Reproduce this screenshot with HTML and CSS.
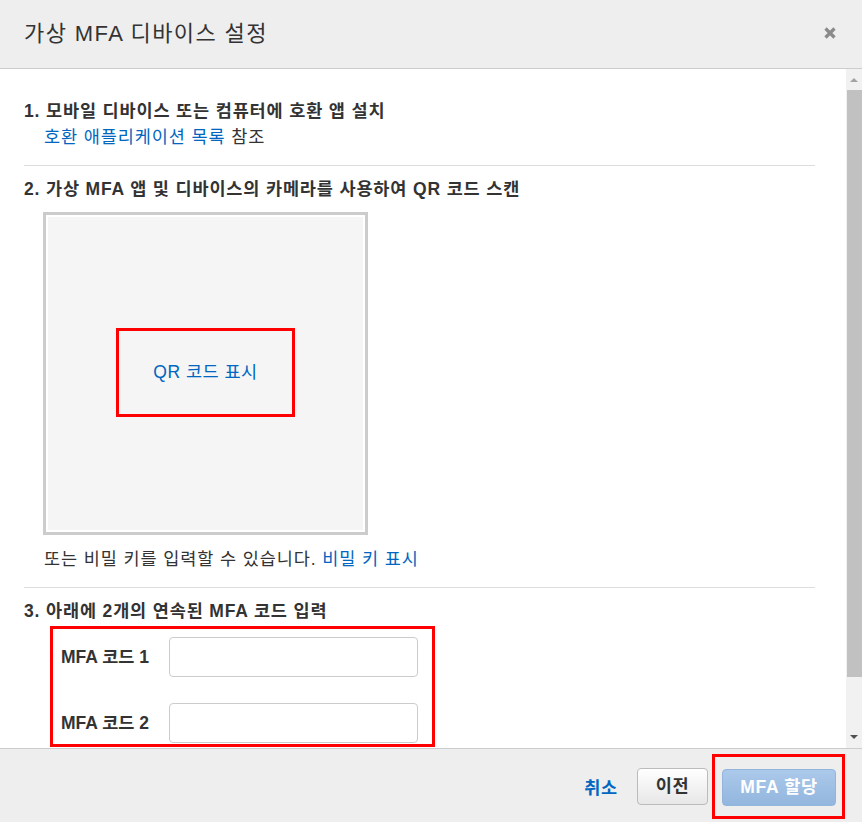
FILE: index.html
```html
<!DOCTYPE html>
<html lang="ko">
<head>
<meta charset="utf-8">
<title>가상 MFA 디바이스 설정</title>
<link rel="stylesheet" href="styles.css">
</head>
<body>
<div class="modal">
  <div class="header">
    <h1 class="title">가상 MFA 디바이스 설정</h1>
    <span class="close" aria-label="닫기">
      <svg width="14" height="14" viewBox="0 0 14 14"><path d="M2.5 2.5 L11.5 11.5 M11.5 2.5 L2.5 11.5" stroke="#8a8a8a" stroke-width="3.2" stroke-linecap="butt"/></svg>
    </span>
  </div>
  <div class="body-wrap">
    <div class="content">
      <div class="step">
        <div class="step-title">1. 모바일 디바이스 또는 컴퓨터에 호환 앱 설치</div>
        <div class="indent line-gap"><a class="link" href="#">호환 애플리케이션 목록</a> 참조</div>
      </div>
      <div class="divider"></div>
      <div class="step">
        <div class="step-title">2. 가상 MFA 앱 및 디바이스의 카메라를 사용하여 QR 코드 스캔</div>
        <div class="qr-box">
          <div class="qr-inner">
            <div class="red-box qr-red"><a class="link qr-link" href="#">QR 코드 표시</a></div>
          </div>
        </div>
        <div class="indent secret">또는 비밀 키를 입력할 수 있습니다. <a class="link" href="#">비밀 키 표시</a></div>
      </div>
      <div class="divider"></div>
      <div class="step">
        <div class="step-title">3. 아래에 2개의 연속된 MFA 코드 입력</div>
        <div class="red-box code-red">
          <div class="field">
            <label class="field-label">MFA 코드 1</label>
            <input class="field-input" type="text">
          </div>
          <div class="field">
            <label class="field-label">MFA 코드 2</label>
            <input class="field-input" type="text">
          </div>
        </div>
      </div>
    </div>
    <div class="scrollbar">
      <div class="sb-btn"><span class="tri-up"></span></div>
      <div class="sb-thumb"></div>
      <div class="sb-space"></div>
      <div class="sb-btn sb-btn-down"><span class="tri-down"></span></div>
    </div>
  </div>
  <div class="footer">
    <a class="cancel" href="#">취소</a>
    <button class="btn btn-prev">이전</button>
    <div class="red-box btn-red">
      <button class="btn btn-primary" disabled>MFA 할당</button>
    </div>
  </div>
</div>
</body>
</html>
```

FILE: styles.css
```css
* { box-sizing: border-box; }
html, body { margin: 0; padding: 0; }
body {
  font-family: "Liberation Sans", "Noto Sans CJK KR", sans-serif;
  font-size: 17.5px;
  color: #333;
  background: #fff;
}
.modal {
  width: 862px;
  height: 822px;
  display: flex;
  flex-direction: column;
  overflow: hidden;
}
.header {
  height: 69px;
  flex: none;
  background: #eeeeee;
  border-bottom: 1px solid #cccccc;
  display: flex;
  align-items: center;
  justify-content: space-between;
  padding: 0 25px 0 24px;
}
.title {
  margin: 0;
  font-size: 22px;
  font-weight: 400;
  line-height: 28px;
  letter-spacing: 1.4px;
  color: #333;
}
.close {
  display: flex;
  width: 14px;
  height: 14px;
  position: relative;
  top: -1px;
}
.body-wrap {
  height: 679px;
  flex: none;
  display: flex;
  overflow: hidden;
}
.content {
  flex: 1;
  padding: 30px 31px 0 24px;
  overflow: hidden;
}
.step { line-height: 25px; }
.step-title { font-weight: 700; color: #333; letter-spacing: 0.85px; }
.indent { padding-left: 20px; letter-spacing: 0.9px; }
.line-gap { margin-top: 1px; }
.link { color: #0066c0; text-decoration: none; }
.qr-link { letter-spacing: 0.5px; }
.divider {
  border-top: 1px solid #dddddd;
  margin: 15px 0 11px;
}
.qr-box {
  margin: 10px 0 0 19px;
  width: 325px;
  height: 323px;
  border: 3px solid #cccccc;
  padding: 2px;
  background: #fff;
}
.qr-inner {
  width: 100%;
  height: 100%;
  background: #f5f5f5;
  display: flex;
  align-items: center;
  justify-content: center;
}
.red-box { border: 3px solid #ff0000; }
.qr-red {
  width: 179px;
  height: 89px;
  display: flex;
  align-items: center;
  justify-content: center;
  margin-top: -3px;
}
.secret { margin-top: 12px; }
.code-red {
  margin: 2px 0 0 26px;
  width: 385px;
  padding: 8px 14px 1px 8px;
  display: flex;
  flex-direction: column;
  gap: 26px;
}
.field {
  display: flex;
  align-items: center;
}
.field-label {
  width: 108px;
  flex: none;
  font-weight: 700;
  color: #333;
}
.field-input {
  width: 249px;
  height: 40px;
  border: 1px solid #cccccc;
  border-radius: 4px;
  background: #fff;
  font: inherit;
  padding: 0 8px;
}
.scrollbar {
  width: 16px;
  flex: none;
  background: #f1f1f1;
  display: flex;
  flex-direction: column;
}
.sb-btn {
  height: 21px;
  flex: none;
  display: flex;
  align-items: center;
  justify-content: center;
}
.sb-btn-down { height: 22px; }
.tri-up, .tri-down {
  width: 0;
  height: 0;
  border-left: 4px solid transparent;
  border-right: 4px solid transparent;
}
.tri-up { border-bottom: 4px solid #a3a3a3; }
.tri-down { border-top: 4px solid #505050; }
.sb-thumb {
  height: 587px;
  flex: none;
  margin-left: 1px;
  background: #c1c1c1;
}
.sb-space { flex: 1; }
.footer {
  flex: 1;
  background: #eeeeee;
  border-top: 1px solid #cccccc;
  display: flex;
  align-items: center;
  justify-content: flex-end;
  padding: 2px 17px 0 0;
}
.cancel {
  color: #0066c0;
  font-weight: 700;
  text-decoration: none;
  letter-spacing: 0.8px;
  margin-right: 19px;
}
.btn {
  font-family: inherit;
  font-size: 17.5px;
  font-weight: 700;
  height: 37px;
  border-radius: 4px;
  line-height: 1;
  letter-spacing: 0.7px;
}
.btn-prev {
  width: 71px;
  color: #333;
  background: linear-gradient(#ffffff, #e7e7e7);
  border: 1px solid #bbbbbb;
  margin-right: 4px;
}
.btn-red {
  padding: 12px 6px 10px 7px;
}
.btn-primary {
  width: 114px;
  color: #ffffff;
  background: linear-gradient(#abc9ea, #93b6de);
  border: 1px solid #94b4dc;
}
```
